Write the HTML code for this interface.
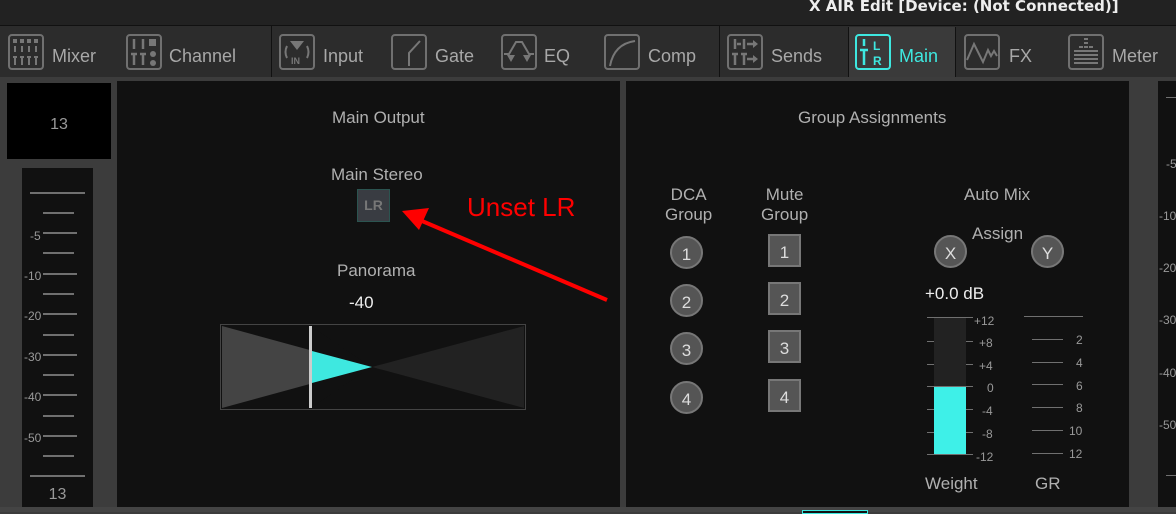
<!DOCTYPE html>
<html><head><style>
*{margin:0;padding:0;box-sizing:border-box}
body{width:1176px;height:512px;overflow:hidden;background:#3c3c3c;font-family:"Liberation Sans",sans-serif;position:relative;color:#aaa}
.a{position:absolute}
.t{position:absolute;font-size:18px;color:#a8a8a8;top:46px}
.ic{position:absolute;top:34px;width:36px;height:36px;border:2px solid #707070;border-radius:4px}
.lbl{position:absolute;font-size:17px;color:#b0b0b0;white-space:nowrap}
.tk{position:absolute;height:2px;background:#707070}
.sl{position:absolute;font-size:12px;color:#999}
.c{position:absolute;width:33px;height:33px;border-radius:50%;background:#555;border:2px solid #777;color:#ddd;font-size:17px;text-align:center;line-height:33px}
.s{position:absolute;width:33px;height:33px;background:#555;border:2px solid #777;color:#ddd;font-size:17px;text-align:center;line-height:33px}
</style></head><body>
<div class="a" style="left:0;top:0;width:1176px;height:25px;background:#222"></div>
<div class="a" style="left:809px;top:-3px;font-size:15px;font-weight:bold;color:#eee;font-family:'DejaVu Sans',sans-serif">X AIR Edit [Device: (Not Connected)]</div>
<div class="a" style="left:0;top:25px;width:1176px;height:52px;background:#2c2c2c;border-top:1px solid #111"></div>
<div class="a" style="left:271px;top:26px;width:1px;height:51px;background:#111"></div>
<div class="a" style="left:719px;top:26px;width:1px;height:51px;background:#111"></div>
<div class="a" style="left:848px;top:27px;width:108px;height:50px;background:#3a3a3a;border-left:1px solid #111;border-right:1px solid #111"></div>

<div class="ic" style="left:8px"><svg width="32" height="32"><g fill="#777"><rect x="3" y="3" width="4" height="4"/><rect x="10" y="3" width="4" height="4"/><rect x="17" y="3" width="4" height="4"/><rect x="24" y="3" width="4" height="4"/></g><g stroke="#777" stroke-width="2"><path d="M5 10v6M12 10v6M19 10v6M26 10v6M3 21h4M5 21v8M10 21h4M12 21v8M17 21h4M19 21v8M24 21h4M26 21v8"/></g></svg></div>
<div class="t" style="left:52px">Mixer</div>
<div class="ic" style="left:126px"><svg width="32" height="32"><g stroke="#777" stroke-width="2.5"><path d="M6 3v10M15 3v10M3 18h6M6 18v11M12 18h6M15 18v11"/></g><rect x="21" y="3" width="7" height="7" fill="#777"/><circle cx="25" cy="18" r="3" fill="#777"/><circle cx="25" cy="27" r="3" fill="#777"/></svg></div>
<div class="t" style="left:169px">Channel</div>
<div class="ic" style="left:279px"><svg width="32" height="32"><path d="M9 5h14l-7 9z" fill="#777"/><path d="M6 10q-3 6 0 12M26 10q3 6 0 12" stroke="#777" stroke-width="2" fill="none"/><text x="10" y="28" font-size="9" fill="#777" font-weight="bold" font-family="Liberation Sans">IN</text></svg></div>
<div class="t" style="left:323px">Input</div>
<div class="ic" style="left:391px"><svg width="32" height="32"><path d="M16 30V17L27 5" stroke="#777" stroke-width="2" fill="none"/></svg></div>
<div class="t" style="left:435px">Gate</div>
<div class="ic" style="left:501px"><svg width="32" height="32"><path d="M1 18h5l7-12h6l7 12h5" stroke="#777" stroke-width="2" fill="none"/><path d="M4 19h8l-4 7zM20 19h8l-4 7z" fill="#777"/></svg></div>
<div class="t" style="left:544px">EQ</div>
<div class="ic" style="left:604px"><svg width="32" height="32"><path d="M4 30Q8 8 29 5" stroke="#777" stroke-width="2" fill="none"/></svg></div>
<div class="t" style="left:648px">Comp</div>
<div class="ic" style="left:727px"><svg width="32" height="32"><g stroke="#777" stroke-width="2.5"><path d="M6 3v10M15 3v10M3 18h6M6 18v11M12 18h6M15 18v11M8 8h4M18 8h7M18 23h7"/></g><path d="M24 4l5 4-5 4zM24 19l5 4-5 4z" fill="#777"/></svg></div>
<div class="t" style="left:771px">Sends</div>
<div class="ic" style="left:855px;border-color:#3ee8e0"><svg width="32" height="32"><g stroke="#3ee8e0" stroke-width="2.5"><path d="M7 3v7M3 14h8M7 14v15"/></g><text x="16" y="14" font-size="12" font-weight="bold" fill="#3ee8e0" font-family="Liberation Sans">L</text><text x="16" y="29" font-size="12" font-weight="bold" fill="#3ee8e0" font-family="Liberation Sans">R</text></svg></div>
<div class="t" style="left:899px;color:#3ee8e0">Main</div>
<div class="ic" style="left:964px"><svg width="32" height="32"><path d="M1 24L8 8l9 18 5-12 3 6 3-5 3 5" stroke="#777" stroke-width="2" fill="none"/></svg></div>
<div class="t" style="left:1009px">FX</div>
<div class="ic" style="left:1068px"><svg width="32" height="32"><g fill="#777"><rect x="14" y="2" width="4" height="2"/><rect x="14" y="6" width="4" height="2"/><rect x="9" y="10" width="4" height="2"/><rect x="14" y="10" width="4" height="2"/><rect x="19" y="10" width="4" height="2"/><rect x="4" y="14" width="24" height="2"/><rect x="4" y="18" width="24" height="2"/><rect x="4" y="22" width="24" height="2"/><rect x="4" y="26" width="24" height="2"/></g></svg></div>
<div class="t" style="left:1112px">Meter</div>

<!-- left strip -->
<div class="a" style="left:7px;top:83px;width:104px;height:76px;background:#000;color:#999;font-size:16px;text-align:center;line-height:84px">13</div>
<div class="a" style="left:22px;top:168px;width:71px;height:339px;background:#111"></div>
<div class="tk" style="left:30px;top:192px;width:55px"></div>
<div class="tk" style="left:43px;top:212px;width:31px"></div>
<div class="tk" style="left:43px;top:232px;width:34px"></div><div class="sl" style="left:30px;top:229px">-5</div>
<div class="tk" style="left:43px;top:252px;width:31px"></div>
<div class="tk" style="left:43px;top:273px;width:34px"></div><div class="sl" style="left:24px;top:269px">-10</div>
<div class="tk" style="left:43px;top:293px;width:31px"></div>
<div class="tk" style="left:43px;top:313px;width:34px"></div><div class="sl" style="left:24px;top:309px">-20</div>
<div class="tk" style="left:43px;top:334px;width:31px"></div>
<div class="tk" style="left:43px;top:354px;width:34px"></div><div class="sl" style="left:24px;top:350px">-30</div>
<div class="tk" style="left:43px;top:374px;width:31px"></div>
<div class="tk" style="left:43px;top:394px;width:34px"></div><div class="sl" style="left:24px;top:390px">-40</div>
<div class="tk" style="left:43px;top:415px;width:31px"></div>
<div class="tk" style="left:43px;top:435px;width:34px"></div><div class="sl" style="left:24px;top:431px">-50</div>
<div class="tk" style="left:43px;top:455px;width:31px"></div>
<div class="tk" style="left:30px;top:475px;width:55px"></div>
<div class="a" style="left:22px;top:486px;width:71px;text-align:center;font-size:16px;color:#999">13</div>

<!-- panel 1 -->
<div class="a" style="left:117px;top:81px;width:503px;height:426px;background:#111"></div>
<div class="lbl" style="left:332px;top:108px">Main Output</div>
<div class="lbl" style="left:331px;top:165px">Main Stereo</div>
<div class="a" style="left:357px;top:189px;width:33px;height:33px;background:#393c42;border:1px solid #2b5450;color:#777;font-weight:bold;font-size:14px;text-align:center;line-height:31px">LR</div>
<div class="lbl" style="left:337px;top:261px">Panorama</div>
<div class="lbl" style="left:349px;top:293px;color:#eee">-40</div>
<svg class="a" style="left:220px;top:324px" width="306" height="86">
<rect x="0.5" y="0.5" width="305" height="85" fill="#111" stroke="#444"/>
<path d="M2 2L152 43L2 84z" fill="#444"/>
<path d="M90 2L152 43L90 84z" fill="#111"/>
<path d="M152 43L304 2V84z" fill="#222"/>
<path d="M92 27L152 43L92 59z" fill="#3ee8e0"/>
<rect x="89" y="2" width="3" height="82" fill="#ccc"/>
</svg>
<div class="a" style="left:467px;top:192px;font-size:26px;color:#f00">Unset LR</div>
<svg class="a" style="left:395px;top:200px" width="220" height="110"><path d="M212 100L20 18" stroke="#f00" stroke-width="4"/><path d="M7 11L34 8L24 30z" fill="#f00"/></svg>

<!-- panel 2 -->
<div class="a" style="left:626px;top:81px;width:503px;height:426px;background:#111"></div>
<div class="lbl" style="left:798px;top:108px">Group Assignments</div>
<div class="lbl" style="left:665px;top:185px;text-align:center;line-height:20px">DCA<br>Group</div>
<div class="lbl" style="left:761px;top:185px;text-align:center;line-height:20px">Mute<br>Group</div>
<div class="lbl" style="left:964px;top:185px">Auto Mix</div>
<div class="lbl" style="left:972px;top:224px">Assign</div>
<div class="c" style="left:670px;top:236px">1</div><div class="c" style="left:670px;top:284px">2</div><div class="c" style="left:670px;top:332px">3</div><div class="c" style="left:670px;top:381px">4</div>
<div class="s" style="left:768px;top:234px">1</div><div class="s" style="left:768px;top:282px">2</div><div class="s" style="left:768px;top:330px">3</div><div class="s" style="left:768px;top:379px">4</div>
<div class="c" style="left:934px;top:235px">X</div><div class="c" style="left:1031px;top:235px">Y</div>
<div class="lbl" style="left:925px;top:284px;color:#eee">+0.0 dB</div>
<div class="a" style="left:934px;top:318px;width:32px;height:137px;background:#222"></div>
<div class="a" style="left:934px;top:386px;width:32px;height:69px;background:#3ef0e8"></div>
<div class="tk" style="left:927px;top:317px;width:46px;height:1px"></div>
<div class="tk" style="left:927px;top:341px;width:7px;height:1px"></div><div class="tk" style="left:966px;top:341px;width:7px;height:1px"></div>
<div class="tk" style="left:927px;top:364px;width:7px;height:1px"></div><div class="tk" style="left:966px;top:364px;width:7px;height:1px"></div>
<div class="tk" style="left:927px;top:386px;width:46px;height:1px"></div>
<div class="tk" style="left:927px;top:409px;width:7px;height:1px"></div><div class="tk" style="left:966px;top:409px;width:7px;height:1px"></div>
<div class="tk" style="left:927px;top:432px;width:7px;height:1px"></div><div class="tk" style="left:966px;top:432px;width:7px;height:1px"></div>
<div class="tk" style="left:927px;top:454px;width:46px;height:1px"></div>
<div class="sl" style="left:974px;top:314px">+12</div><div class="sl" style="left:979px;top:336px">+8</div><div class="sl" style="left:979px;top:359px">+4</div><div class="sl" style="left:987px;top:381px">0</div><div class="sl" style="left:982px;top:404px">-4</div><div class="sl" style="left:982px;top:427px">-8</div><div class="sl" style="left:976px;top:450px;height:11px;overflow:hidden">-12</div>
<div class="tk" style="left:1024px;top:316px;width:59px;height:1px"></div>
<div class="tk" style="left:1032px;top:339px;width:31px;height:1px"></div><div class="sl" style="left:1076px;top:333px">2</div>
<div class="tk" style="left:1032px;top:362px;width:31px;height:1px"></div><div class="sl" style="left:1076px;top:356px">4</div>
<div class="tk" style="left:1032px;top:384px;width:31px;height:1px"></div><div class="sl" style="left:1076px;top:379px">6</div>
<div class="tk" style="left:1032px;top:407px;width:31px;height:1px"></div><div class="sl" style="left:1076px;top:401px">8</div>
<div class="tk" style="left:1032px;top:430px;width:31px;height:1px"></div><div class="sl" style="left:1069px;top:424px">10</div>
<div class="tk" style="left:1032px;top:453px;width:31px;height:1px"></div><div class="sl" style="left:1069px;top:447px">12</div>
<div class="lbl" style="left:925px;top:474px">Weight</div>
<div class="lbl" style="left:1035px;top:474px">GR</div>

<!-- right strip -->
<div class="a" style="left:1158px;top:81px;width:18px;height:426px;background:#111"></div>
<div class="tk" style="left:1166px;top:97px;width:10px;height:1px"></div>
<div class="sl" style="left:1166px;top:157px">-5</div><div class="sl" style="left:1159px;top:209px">-10</div><div class="sl" style="left:1159px;top:261px">-20</div><div class="sl" style="left:1159px;top:313px">-30</div><div class="sl" style="left:1159px;top:366px">-40</div><div class="sl" style="left:1159px;top:418px">-50</div>
<div class="tk" style="left:1166px;top:475px;width:10px;height:1px"></div>
<div class="a" style="left:0;top:507px;width:1176px;height:5px;background:#444"></div>
<div class="a" style="left:802px;top:510px;width:66px;height:4px;border:1px solid #3ee8e0;background:#111"></div>
</body></html>
